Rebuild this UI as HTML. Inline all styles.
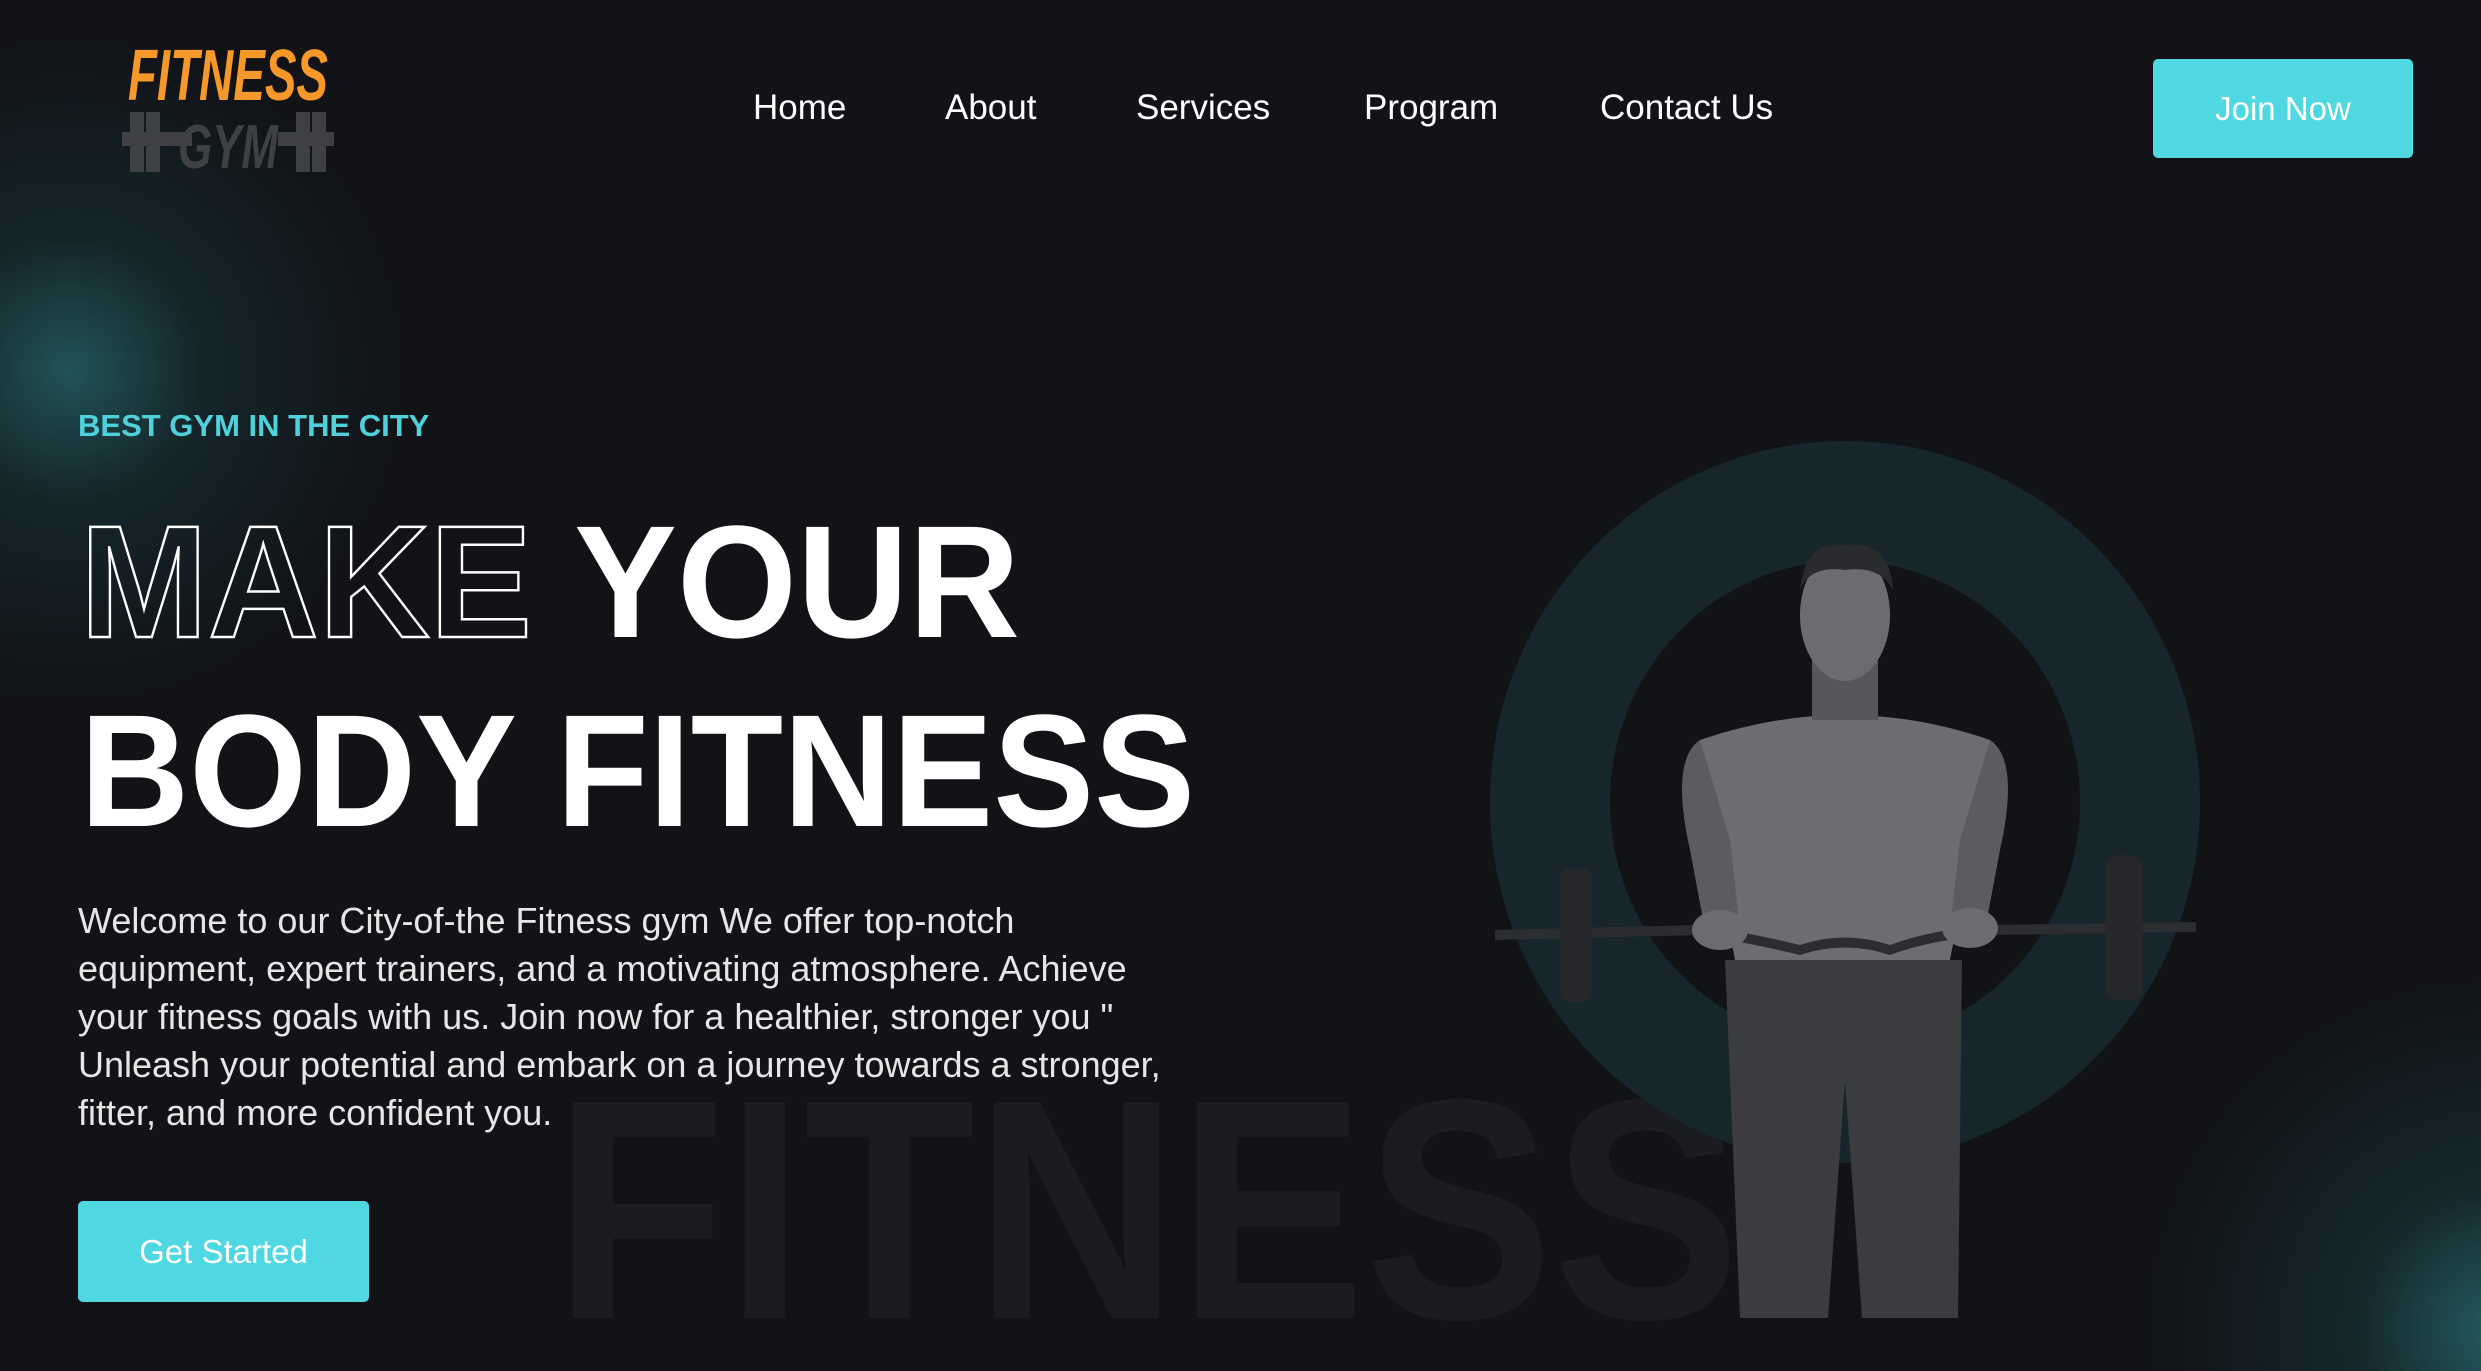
<!DOCTYPE html>
<html><head><meta charset="utf-8"><style>
html,body{margin:0;padding:0;width:2481px;height:1371px;overflow:hidden;background:#111317}
#w{width:2481px;height:1371px;overflow:hidden;position:relative;font-family:"Liberation Sans",sans-serif;color:#fff;
background:radial-gradient(circle 330px at 70px 370px,rgba(40,110,115,.7) 0%,rgba(30,80,85,.3) 40%,rgba(17,19,23,0) 100%),radial-gradient(circle 350px at 2500px 1330px,rgba(40,110,115,.8) 0%,rgba(30,80,85,.35) 40%,rgba(17,19,23,0) 100%),#111317}
.nav a{position:absolute;top:88px;font-size:35px;color:#fff;text-decoration:none}
.btn{position:absolute;background:#4fd8e2;border-radius:5px;color:#fff;font-size:33px;display:flex;align-items:center;justify-content:center}
.tag{position:absolute;left:78px;top:408px;font-size:31px;font-weight:bold;color:#4fd1dc}
.para{position:absolute;left:78px;top:897px;font-size:36px;line-height:48px;color:#e6e6e6;white-space:nowrap}
svg{position:absolute;left:0;top:0}
</style></head><body><div id="w">
<svg width="2481" height="1371">
  <text x="554" y="1318" font-family="Liberation Sans" font-weight="bold" font-size="314" fill="#1b1c20" textLength="1186" lengthAdjust="spacingAndGlyphs">FITNESS</text>
  <ellipse cx="1845" cy="802" rx="295" ry="301" fill="none" stroke="#17262b" stroke-width="120"/>
  <g>
    <path d="M1725 960 L1962 960 L1958 1318 L1862 1318 L1845 1080 L1828 1318 L1740 1318 Z" fill="#3a3c40"/>
    <path d="M1700 740 Q1845 690 1990 740 L2000 830 Q1960 900 1950 960 L1735 960 Q1725 900 1690 830 Z" fill="#6b6d70"/>
    <path d="M1700 740 Q1670 760 1690 850 L1705 930 L1740 930 L1730 840 Z" fill="#5a5c60"/>
    <path d="M1990 740 Q2020 760 2000 850 L1985 930 L1950 930 L1960 840 Z" fill="#5a5c60"/>
    <rect x="1812" y="660" width="66" height="60" fill="#55575b"/>
    <ellipse cx="1845" cy="615" rx="45" ry="66" fill="#6a6c70"/>
    <path d="M1800 590 Q1805 540 1845 545 Q1890 540 1893 590 Q1880 565 1845 570 Q1810 565 1800 590Z" fill="#2a2b2e"/>
    <path d="M1495 930 L1700 925 Q1760 935 1800 945 Q1845 930 1890 945 Q1930 930 1990 925 L2196 922 L2196 932 L1990 935 Q1930 940 1890 955 Q1845 940 1800 955 Q1760 945 1700 935 L1495 940Z" fill="#2c2d30"/>
    <rect x="1560" y="868" width="32" height="134" rx="10" fill="#26272a"/>
    <rect x="2105" y="855" width="38" height="145" rx="12" fill="#26272a"/>
    <ellipse cx="1720" cy="930" rx="28" ry="20" fill="#6a6c70"/>
    <ellipse cx="1970" cy="928" rx="28" ry="20" fill="#6a6c70"/>
  </g>
  <text x="80" y="637" font-family="Liberation Sans" font-weight="bold" font-size="160" fill="none" stroke="#fff" stroke-width="2.5" textLength="452" lengthAdjust="spacingAndGlyphs">MAKE</text>
  <text x="574" y="637" font-family="Liberation Sans" font-weight="bold" font-size="160" fill="#fff" textLength="446" lengthAdjust="spacingAndGlyphs">YOUR</text>
  <text x="80" y="826" font-family="Liberation Sans" font-weight="bold" font-size="160" fill="#fff" textLength="1115" lengthAdjust="spacingAndGlyphs">BODY FITNESS</text>
  <text x="128" y="100" font-family="Liberation Sans" font-style="italic" font-weight="bold" font-size="72" fill="#f7982a" textLength="200" lengthAdjust="spacingAndGlyphs">FITNESS</text>
  <g fill="#3f4043">
    <rect x="130" y="112" width="14" height="60"/><rect x="146" y="112" width="14" height="60"/>
    <rect x="122" y="132" width="70" height="14"/>
    <rect x="296" y="112" width="14" height="60"/><rect x="312" y="112" width="14" height="60"/>
    <rect x="278" y="132" width="56" height="14"/>
  </g>
  <text x="178" y="168" font-family="Liberation Sans" font-style="italic" font-weight="bold" font-size="62" fill="#3f4043" textLength="100" lengthAdjust="spacingAndGlyphs">GYM</text>
</svg>
<div class="nav">
  <a style="left:753px">Home</a>
  <a style="left:945px">About</a>
  <a style="left:1136px">Services</a>
  <a style="left:1364px">Program</a>
  <a style="left:1600px">Contact Us</a>
</div>
<div class="btn" style="left:2153px;top:59px;width:260px;height:99px">Join Now</div>
<div class="tag">BEST GYM IN THE CITY</div>
<div class="para">Welcome to our City-of-the Fitness gym We offer top-notch<br>equipment, expert trainers, and a motivating atmosphere. Achieve<br>your fitness goals with us. Join now for a healthier, stronger you "<br>Unleash your potential and embark on a journey towards a stronger,<br>fitter, and more confident you.</div>
<div class="btn" style="left:78px;top:1201px;width:291px;height:101px">Get Started</div>
</div></body></html>
